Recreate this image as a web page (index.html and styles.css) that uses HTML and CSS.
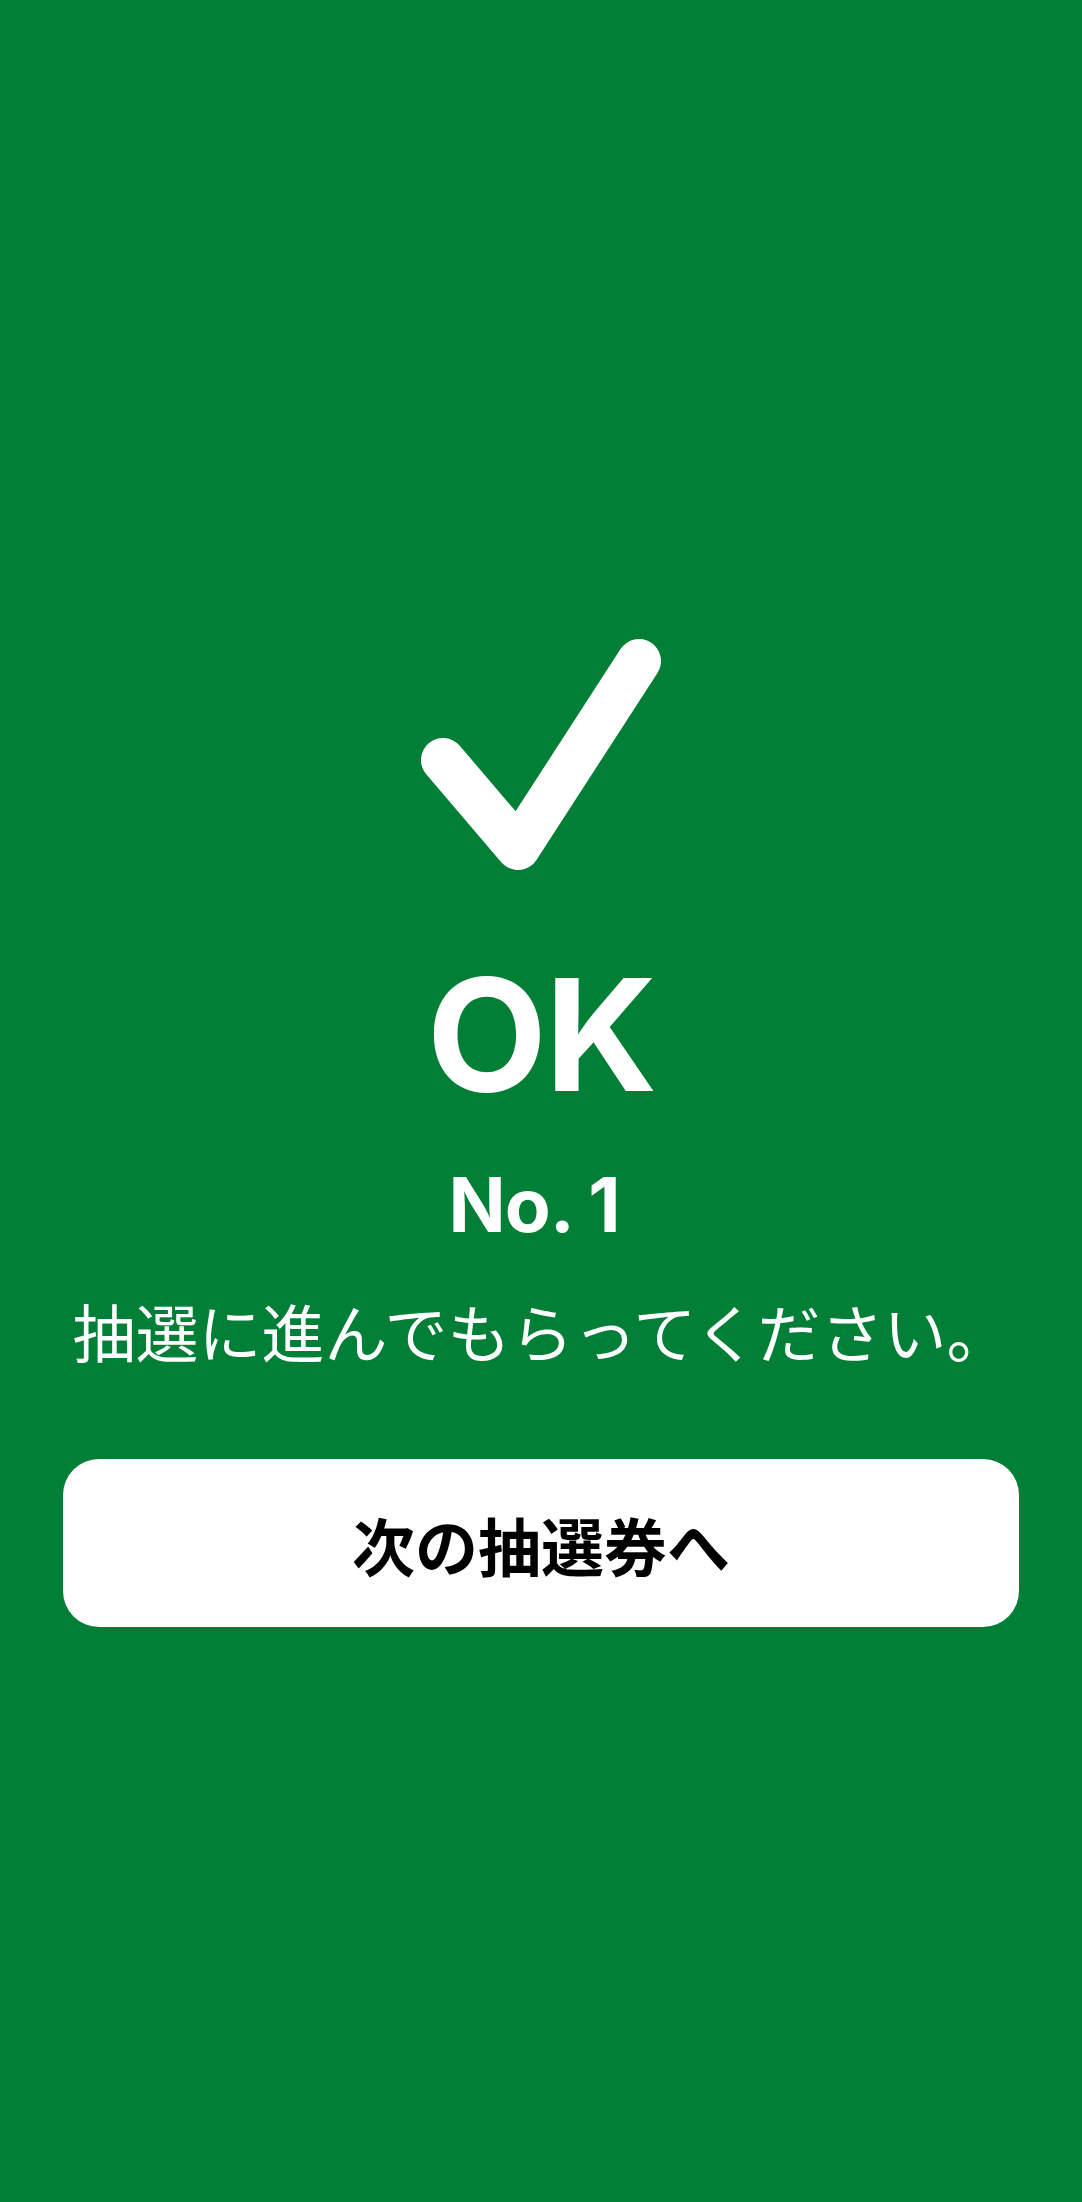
FILE: index.html
```html
<!DOCTYPE html>
<html lang="ja">
<head>
    <meta charset="UTF-8">
    <meta name="viewport" content="width=device-width, initial-scale=1.0">
    <title>OK</title>
    <link rel="stylesheet" href="styles.css">
</head>
<body>

<div class="screen">
    <svg class="check" viewBox="0 0 240 232" aria-hidden="true">
        <polyline points="22,121 97,209 218,22" fill="none" stroke="#fff" stroke-width="44" stroke-linecap="round" stroke-linejoin="round"/>
    </svg>

    <h1 class="result">OK</h1>
    <p class="number">No. 1</p>
    <p class="message">抽選に進んでもらってください。</p>

    <div class="actions">
        <button class="next-button" type="button">次の抽選券へ</button>
    </div>
</div>

</body>
</html>
```

FILE: styles.css
```css
body {
    margin: 0;
    background-color: #017f36;
    font-family: Inter, "Noto Sans CJK JP", sans-serif;
    color: #fff;
}

.screen {
    min-height: 2202px;
    text-align: center;
}

.check {
    display: block;
    width: 240px;
    height: 232px;
    margin: 0 auto;
    padding-top: 639px;
}

.result {
    margin: 86px 0 0;
    font-size: 156px;
    font-weight: 700;
    line-height: 1;
    letter-spacing: -2px;
}

.number {
    margin: 54px 0 0;
    padding-right: 14px;
    font-size: 75px;
    font-weight: 700;
    line-height: 1;
    letter-spacing: -1px;
}

.message {
    margin: 56px 0 0;
    font-family: "Noto Sans CJK JP", sans-serif;
    font-size: 63px;
    font-weight: 400;
    line-height: 1;
}

.actions {
    padding: 98px 63px 0;
}

.next-button {
    display: block;
    width: 100%;
    height: 168px;
    border: none;
    border-radius: 36px;
    background-color: #fff;
    color: #000;
    font-family: "Noto Sans CJK JP", sans-serif;
    font-size: 63px;
    font-weight: 700;
    cursor: pointer;
}
```
